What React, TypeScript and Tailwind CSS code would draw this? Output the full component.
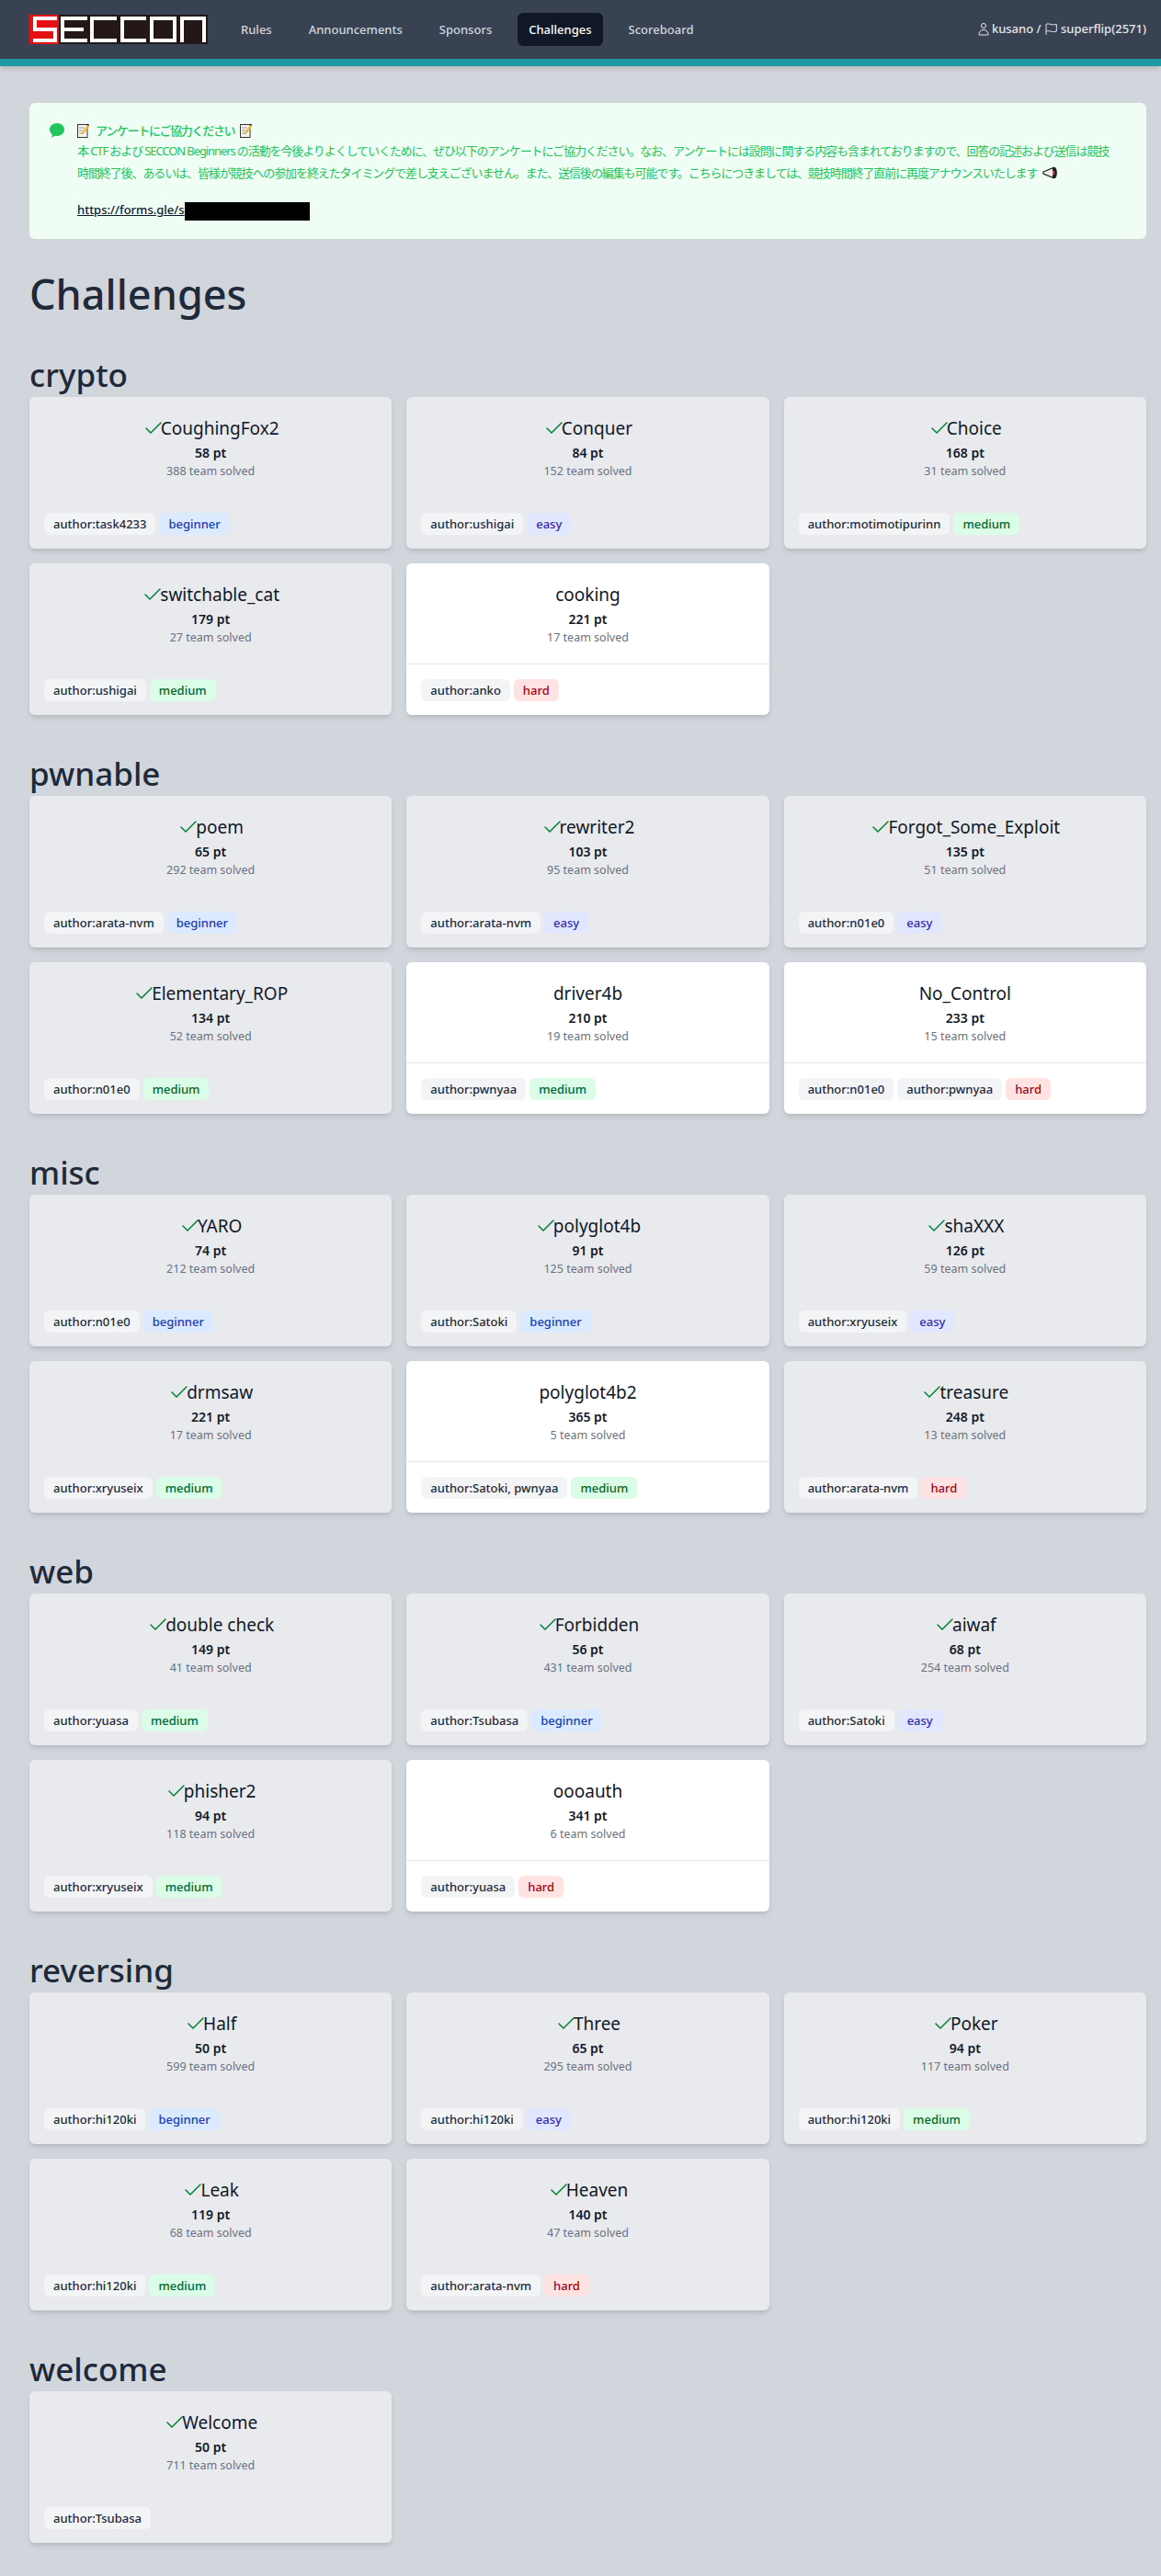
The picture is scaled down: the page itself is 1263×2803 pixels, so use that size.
import { Check } from "lucide-react";

type Level = "beginner" | "easy" | "medium" | "hard" | null;

interface Challenge {
  name: string;
  points: number;
  solves: number;
  authors: string[];
  level: Level;
  solved: boolean;
}

const c = (name: string, points: number, solves: number, authors: string[], level: Level, solved = true): Challenge => ({
  name,
  points,
  solves,
  authors,
  level,
  solved,
});

const categories: { title: string; items: Challenge[] }[] = [
  {
    title: "crypto",
    items: [
      c("CoughingFox2", 58, 388, ["task4233"], "beginner"),
      c("Conquer", 84, 152, ["ushigai"], "easy"),
      c("Choice", 168, 31, ["motimotipurinn"], "medium"),
      c("switchable_cat", 179, 27, ["ushigai"], "medium"),
      c("cooking", 221, 17, ["anko"], "hard", false),
    ],
  },
  {
    title: "pwnable",
    items: [
      c("poem", 65, 292, ["arata-nvm"], "beginner"),
      c("rewriter2", 103, 95, ["arata-nvm"], "easy"),
      c("Forgot_Some_Exploit", 135, 51, ["n01e0"], "easy"),
      c("Elementary_ROP", 134, 52, ["n01e0"], "medium"),
      c("driver4b", 210, 19, ["pwnyaa"], "medium", false),
      c("No_Control", 233, 15, ["n01e0", "pwnyaa"], "hard", false),
    ],
  },
  {
    title: "misc",
    items: [
      c("YARO", 74, 212, ["n01e0"], "beginner"),
      c("polyglot4b", 91, 125, ["Satoki"], "beginner"),
      c("shaXXX", 126, 59, ["xryuseix"], "easy"),
      c("drmsaw", 221, 17, ["xryuseix"], "medium"),
      c("polyglot4b2", 365, 5, ["Satoki, pwnyaa"], "medium", false),
      c("treasure", 248, 13, ["arata-nvm"], "hard"),
    ],
  },
  {
    title: "web",
    items: [
      c("double check", 149, 41, ["yuasa"], "medium"),
      c("Forbidden", 56, 431, ["Tsubasa"], "beginner"),
      c("aiwaf", 68, 254, ["Satoki"], "easy"),
      c("phisher2", 94, 118, ["xryuseix"], "medium"),
      c("oooauth", 341, 6, ["yuasa"], "hard", false),
    ],
  },
  {
    title: "reversing",
    items: [
      c("Half", 50, 599, ["hi120ki"], "beginner"),
      c("Three", 65, 295, ["hi120ki"], "easy"),
      c("Poker", 94, 117, ["hi120ki"], "medium"),
      c("Leak", 119, 68, ["hi120ki"], "medium"),
      c("Heaven", 140, 47, ["arata-nvm"], "hard"),
    ],
  },
  {
    title: "welcome",
    items: [c("Welcome", 50, 711, ["Tsubasa"], null)],
  },
];

const levelStyles: Record<string, string> = {
  beginner: "bg-blue-100 text-blue-800",
  easy: "bg-indigo-100 text-indigo-800",
  medium: "bg-green-100 text-green-800",
  hard: "bg-red-100 text-red-800",
};

function Logo() {
  return (
    <svg width="194" height="32" viewBox="0 0 194 32" className="shrink-0">
      <rect width="194" height="32" fill="#231815" />
      <rect width="32" height="32" fill="#e60f14" />
      <g fill="none" stroke="#fff" strokeWidth="4">
        <path d="M30 4H6V16H28V28H4" />
        <path d="M63 4H36V28H63M36 16H59" />
        <path d="M95 4H68V28H95" />
        <path d="M127 4H101V28H127" />
        <rect x="133" y="4" width="25" height="24" />
        <path d="M166 30V4H190V30" />
      </g>
    </svg>
  );
}

function Memo() {
  return (
    <svg width="14" height="16" viewBox="0 0 14 16" className="inline-block align-[-3px]">
      <rect x="0.5" y="1.5" width="10.5" height="14" fill="#f5f5f5" stroke="#333" />
      <path d="M2 5h6M2 8h4M2 11h3" stroke="#999" />
      <path d="M5 12 12 3" stroke="#f0b93a" strokeWidth="2.5" />
      <path d="M11 1l2 1.500" stroke="#333" strokeWidth="1.500" />
    </svg>
  );
}

function Megaphone() {
  return (
    <svg width="17" height="14" viewBox="0 0 17 14" className="ml-1.5 inline-block align-[-2px]">
      <path d="M1 6 12 1.500V12.500L1 8Z" fill="#eee" stroke="#222" strokeWidth="1.300" />
      <path d="M11 1h3c2.500 2.500 2.500 9.500 0 12h-3z" fill="#222" />
      <path d="M12 5v4" stroke="#e0455a" strokeWidth="2" />
    </svg>
  );
}

function Navbar() {
  const links = ["Rules", "Announcements", "Sponsors", "Challenges", "Scoreboard"];
  return (
    <nav className="flex h-[72px] items-start justify-between border-b-8 border-[#1d9aa2] bg-[#394252] pr-4 pl-8 shadow-md">
      <div className="flex h-16 items-center">
        <Logo />
        <div className="ml-6 flex gap-4">
          {links.map((l) => (
            <a
              key={l}
              className={`rounded-md px-3 py-2 text-[13px] leading-5 font-medium ${
                l === "Challenges" ? "bg-gray-900 text-white" : "text-gray-300"
              }`}
            >
              {l}
            </a>
          ))}
        </div>
      </div>
      <div className="flex h-16 items-center text-[13px] font-medium text-gray-200">
        <svg width="16" height="16" viewBox="0 0 24 24" fill="none" stroke="currentColor" strokeWidth="1.500" className="mr-px">
          <path d="M15.750 6a3.750 3.750 0 1 1-7.500 0 3.750 3.750 0 0 1 7.500 0ZM4.500 20.120a7.500 7.500 0 0 1 15 0v.880h-15z" />
        </svg>
        <span>kusano /&nbsp;</span>
        <svg width="16" height="16" viewBox="0 0 24 24" fill="none" stroke="currentColor" strokeWidth="1.500" className="mr-0.5">
          <path d="M3 21V3.500c4-1.500 6 0 9 .5s5 .5 8-.5V15c-3 1-5 1-8 .5s-5-2-9-.5" />
        </svg>
        <span>superflip(2571)</span>
      </div>
    </nav>
  );
}

function Notice() {
  return (
    <div className="flex rounded-md bg-[#f0fdf4] p-5 text-[#22c55e]">
      <svg width="20" height="20" viewBox="0 0 20 20" fill="#22c55e" className="shrink-0">
        <path d="M10 2c-4.400 0-8 3-8 7 0 2.300 1.200 4.200 3 5.500-.1 1-.5 2-1.200 2.900 1.500-.2 2.900-.8 3.900-1.700.7.200 1.500.3 2.300.3 4.400 0 8-3 8-7s-3.600-7-8-7Z" />
      </svg>
      <div className="ml-3 flex-1">
        <p className="flex h-5 items-center gap-1.5 text-[13px] leading-5 font-medium tracking-[-1.300px]">
          <Memo />
          <span>アンケートにご協力ください</span>
          <Memo />
        </p>
        <p className="whitespace-nowrap text-[13px] leading-6 tracking-[-1.100px]">
          本 CTF および SECCON Beginners の活動を今後よりよくしていくために、ぜひ以下のアンケートにご協力ください。なお、アンケートには設問に関する内容も含まれておりますので、回答の記述および送信は競技
          <br />
          時間終了後、あるいは、皆様が競技への参加を終えたタイミングで差し支えございません。また、送信後の編集も可能です。こちらにつきましては、競技時間終了直前に再度アナウンスいたします
          <Megaphone />
        </p>
        <p className="mt-4 flex h-6 items-start text-[13px] leading-6 font-medium text-gray-900">
          <span className="underline">https://forms.gle/s</span>
          <span className="mt-1 h-5 w-[136px] bg-black" />
        </p>
      </div>
    </div>
  );
}

function ChallengeCard({ item }: { item: Challenge }) {
  return (
    <div className={`flex h-[165px] flex-col rounded-md shadow-md ${item.solved ? "bg-[#e9eaee]" : "bg-white"}`}>
      <div className="h-[109px] px-4 pt-5 text-center">
        <div className="flex h-7 items-center justify-center text-[19px] leading-7 text-gray-900">
          {item.solved && <Check className="-mr-1 h-6 w-6 text-green-700" strokeWidth={1.500} />}
          <span>{item.name}</span>
        </div>
        <div className="mt-[3px] text-sm leading-5 font-semibold text-gray-900">{item.points} pt</div>
        <div className="text-[12.500px] leading-5 text-gray-500">{item.solves} team solved</div>
      </div>
      <div className={`flex flex-1 items-center gap-1 border-t px-4 ${item.solved ? "border-[#e6e8ec]" : "border-gray-200"}`}>
        {item.authors.map((a) => (
          <span key={a} className="rounded-md bg-gray-100 px-2.5 py-1 text-[13px] leading-4 font-medium text-gray-800">
            author:{a}
          </span>
        ))}
        {item.level && (
          <span className={`rounded-md px-2.5 py-1 text-[13px] leading-4 font-medium ${levelStyles[item.level]}`}>
            {item.level}
          </span>
        )}
      </div>
    </div>
  );
}

export default function App() {
  return (
    <div className="min-h-[2803px] bg-gray-300 font-['Noto_Sans','Noto_Sans_CJK_JP',sans-serif]">
      <Navbar />
      <main className="pt-10 pr-4 pb-10 pl-8">
        <Notice />
        <h1 className="mt-9 text-[45px] leading-12 font-medium text-gray-800">Challenges</h1>
        {categories.map((cat) => (
          <section key={cat.title} className="mt-[44px] first:mt-9">
            <h2 className="mb-1 text-[35px] leading-10 font-medium text-gray-800">{cat.title}</h2>
            <div className="grid grid-cols-3 gap-4">
              {cat.items.map((item) => (
                <ChallengeCard key={item.name} item={item} />
              ))}
            </div>
          </section>
        ))}
      </main>
    </div>
  );
}
